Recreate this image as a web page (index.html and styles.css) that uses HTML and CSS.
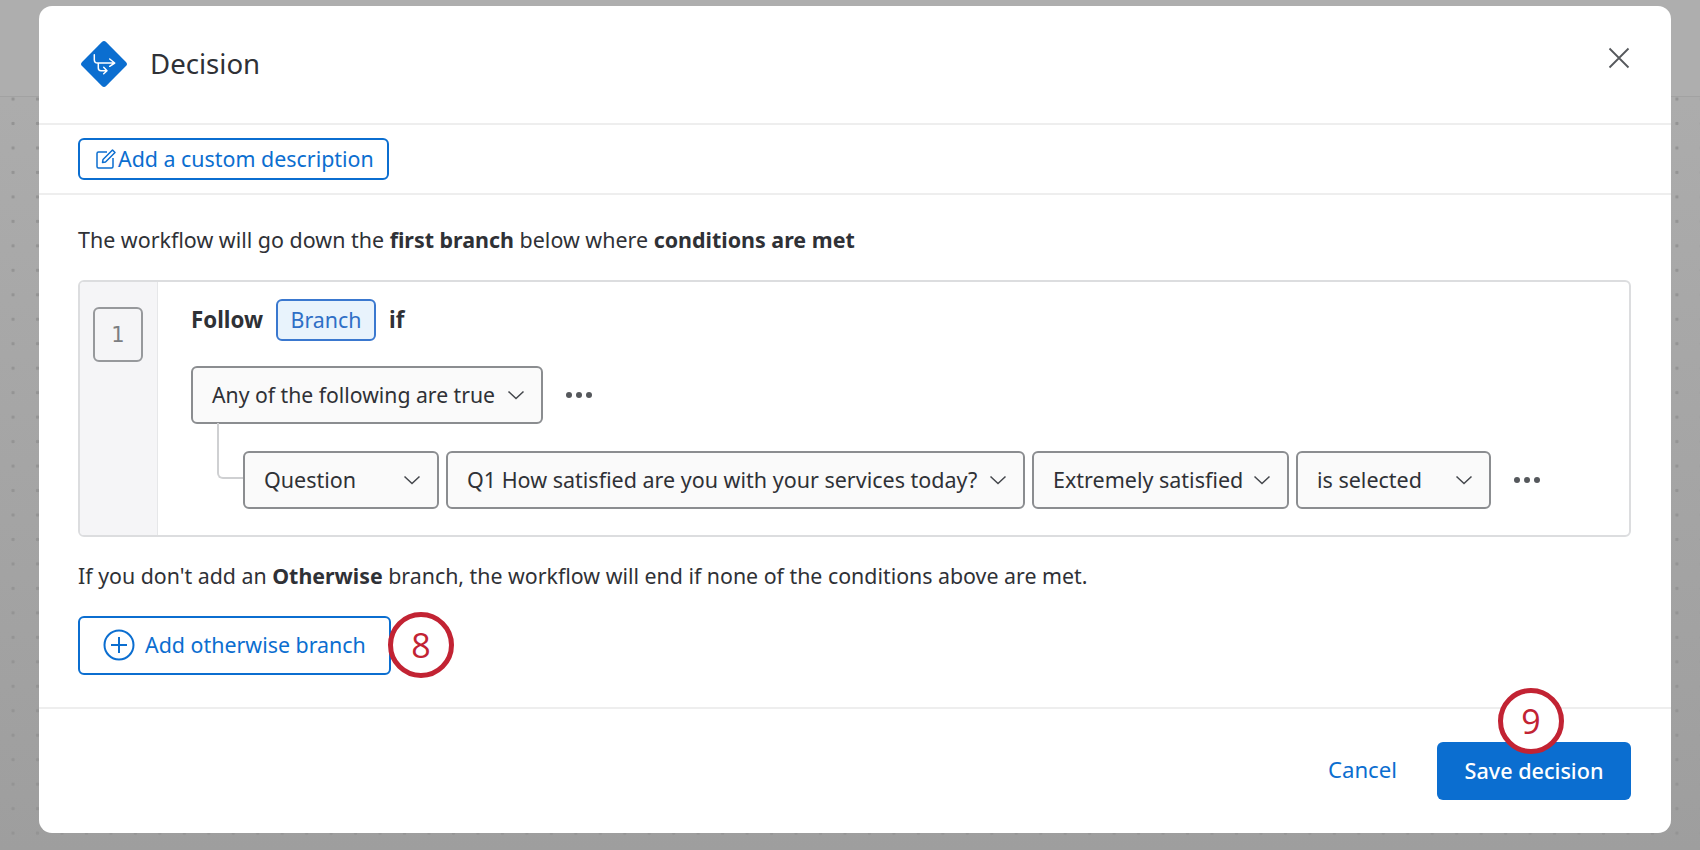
FILE: index.html
```html
<!DOCTYPE html>
<html lang="en">
<head>
<meta charset="utf-8">
<title>Decision</title>
<link rel="stylesheet" href="styles.css">
</head>
<body>
<div class="topband"></div>
<main class="modal">
  <header class="modal-head">
    <svg class="logo" width="50" height="50" viewBox="0 0 50 50"><rect x="8" y="8" width="34" height="34" rx="3" fill="#0b6ed0" transform="rotate(45 25 25)"/><path d="M15.300 15.700v5a3.300 3.300 0 0 0 3.300 3.300H35.700M30.700 20l5 4-5 3.300M19.300 24v5a2.700 2.700 0 0 0 2.700 2.700H28M24.700 28.300l3.300 3.400-3.300 3" fill="none" stroke="#fff" stroke-width="1.500" stroke-linecap="round" stroke-linejoin="round"/></svg>
    <h1 class="title">Decision</h1>
    <svg class="close" width="22" height="22" viewBox="0 0 22 22"><path d="M1.500 1.500l19 19M20.500 1.500l-19 19" fill="none" stroke="#55585c" stroke-width="1.800"/></svg>
  </header>
  <div class="desc-bar">
    <button class="desc-btn">
      <svg width="22" height="22" viewBox="0 0 22 22"><path d="M12 4H3.500A1.500 1.500 0 0 0 2 5.500v13A1.500 1.500 0 0 0 3.500 20h13a1.500 1.500 0 0 0 1.500-1.500V10M8 11.500L17.500 2 20 4.500 10.500 14 7.500 14.500z" fill="none" stroke="#0b6ed0" stroke-width="1.500" stroke-linejoin="round"/></svg>
      <span>Add a custom description</span>
    </button>
  </div>
  <section class="content">
    <p class="intro">The workflow will go down the <b>first branch</b> below where <b>conditions are met</b></p>
    <div class="branch-box">
      <div class="gutter"><div class="num">1</div></div>
      <div class="branch-main">
        <div class="follow"><b>Follow</b><span class="tag">Branch</span><b>if</b></div>
        <div class="any-row">
          <div class="dd dd-any"><span>Any of the following are true</span><svg class="chev" width="18" height="10" viewBox="0 0 18 10"><path d="M1.500 1.500L9 8.500l7.500-7" fill="none" stroke="#44474c" stroke-width="1.500"/></svg></div>
          <div class="more"><i></i><i></i><i></i></div>
        </div>
        <div class="cond-row">
          <span class="elbow"></span>
          <div class="dd dd-q"><span>Question</span><svg class="chev" width="18" height="10" viewBox="0 0 18 10"><path d="M1.500 1.500L9 8.500l7.500-7" fill="none" stroke="#44474c" stroke-width="1.500"/></svg></div>
          <div class="dd dd-q1"><span>Q1 How satisfied are you with your services today?</span><svg class="chev" width="18" height="10" viewBox="0 0 18 10"><path d="M1.500 1.500L9 8.500l7.500-7" fill="none" stroke="#44474c" stroke-width="1.500"/></svg></div>
          <div class="dd dd-ext"><span>Extremely satisfied</span><svg class="chev" width="18" height="10" viewBox="0 0 18 10"><path d="M1.500 1.500L9 8.500l7.500-7" fill="none" stroke="#44474c" stroke-width="1.500"/></svg></div>
          <div class="dd dd-sel"><span>is selected</span><svg class="chev" width="18" height="10" viewBox="0 0 18 10"><path d="M1.500 1.500L9 8.500l7.500-7" fill="none" stroke="#44474c" stroke-width="1.500"/></svg></div>
          <div class="more"><i></i><i></i><i></i></div>
        </div>
      </div>
    </div>
    <p class="note">If you don't add an <b>Otherwise</b> branch, the workflow will end if none of the conditions above are met.</p>
    <div class="add-row">
      <button class="add-btn">
        <svg width="32" height="32" viewBox="0 0 32 32"><circle cx="16" cy="16" r="14.500" fill="none" stroke="#0b6ed0" stroke-width="2"/><path d="M16 8v16M8 16h16" stroke="#0b6ed0" stroke-width="2"/></svg>
        <span>Add otherwise branch</span>
      </button>
      <div class="badge badge-8">8</div>
    </div>
  </section>
  <footer class="modal-foot">
    <a class="cancel">Cancel</a>
    <div class="save-wrap">
      <div class="badge badge-9">9</div>
      <button class="save">Save decision</button>
    </div>
  </footer>
</main>
</body>
</html>
```
FILE: styles.css
```css
* { box-sizing: border-box; }
html, body { margin: 0; height: 850px; overflow: hidden; }
body {
  position: relative;
  padding: 6px 29px 0 39px;
  font-family: "Noto Sans", sans-serif;
  color: #2f3136;
  background-color: #a4a4a4;
  background-image:
    radial-gradient(circle, #949494 0 1.500px, transparent 2px),
    linear-gradient(180deg, #aeaeae 0, #a8a8a8 300px, #9e9e9e 100%);
  background-size: 24.47px 24.47px, 100% 100%;
  background-position: 0.8px 86.8px, 0 0;
}
.topband {
  position: absolute;
  left: 0; top: 0; right: 0;
  height: 97px;
  background: #aeaeae;
  border-bottom: 1px solid #a2a2a2;
}
.modal {
  position: relative;
  width: 1632px;
  height: 827px;
  background: #fff;
  border-radius: 13px;
  display: flex;
  flex-direction: column;
}
.modal-head {
  height: 119px;
  padding: 0 41px 0 40px;
  display: flex;
  align-items: flex-start;
  border-bottom: 2px solid #eeeeee;
}
.logo { margin-top: 33px; }
.title { margin: 39px 0 0 21px; font-size: 27.6px; line-height: 36px; font-weight: 400; flex: 1; }
.close { margin-top: 41px; }
.desc-bar {
  height: 70px;
  padding: 13px 39px 0;
  border-bottom: 2px solid #eeeeee;
}
button { font-family: inherit; cursor: pointer; background: #fff; }
.desc-btn {
  width: 311px;
  height: 42px;
  padding: 0 0 2px 15px;
  display: flex;
  align-items: center;
  gap: 1px;
  border: 2px solid #0b6ed0;
  border-radius: 6px;
  color: #0b6ed0;
  font-size: 21.4px;
}
.desc-btn svg { margin-top: 2px; }
.content { flex: 1; padding: 0 39px; }
.intro { margin: 30px 0 0; font-size: 21.45px; line-height: 30px; }
.branch-box {
  margin-top: 25px;
  width: 1553px;
  height: 257px;
  border: 2px solid #dcdddf;
  border-radius: 6px;
  display: flex;
  overflow: hidden;
}
.gutter { width: 78px; background: #f5f5f7; border-right: 1px solid #e6e7e9; padding: 25px 0 0 13px; flex: none; }
.num {
  width: 50px; height: 55px;
  display: flex; align-items: center; justify-content: center;
  border: 2px solid #97999c;
  border-radius: 6px;
  font-family: "DejaVu Sans", sans-serif;
  font-size: 21px;
  color: #7c7e82;
}
.branch-main { padding: 17px 0 0 33px; flex: 1; }
.follow { display: flex; align-items: center; height: 42px; font-size: 22.3px; }
.follow b { padding-bottom: 2px; }
.tag {
  margin: 0 13px 0 13px;
  width: 100px; height: 42px;
  padding-bottom: 2px;
  display: flex; align-items: center; justify-content: center;
  background: #e8f3fc;
  border: 2px solid #3a78cf;
  border-radius: 6px;
  font-size: 21.4px;
  color: #2f6fc6;
}
.any-row { margin-top: 25px; display: flex; align-items: center; gap: 23px; }
.dd {
  height: 58px;
  padding: 0 16px 2px 19px;
  display: flex; align-items: center; justify-content: space-between;
  background: #fafafa;
  border: 2px solid #8b8d90;
  border-radius: 6px;
  font-size: 21.5px;
  flex: none;
}
.dd span { white-space: nowrap; }
.chev { flex: none; margin-top: 2px; }
.dd-any { width: 352px; font-size: 21.2px; }
.more { display: flex; gap: 4px; }
.more i { width: 6px; height: 6px; border-radius: 50%; background: #55585c; display: block; }
.cond-row { position: relative; margin: 27px 0 0 52px; display: flex; align-items: center; gap: 7px; }
.elbow {
  position: absolute; left: -26px; top: -28px;
  width: 26px; height: 56px;
  border-left: 2px solid #cfd0d2;
  border-bottom: 2px solid #cfd0d2;
  border-bottom-left-radius: 6px;
}
.dd-q { width: 196px; }
.dd-q1 { width: 579px; }
.dd-ext { width: 257px; }
.dd-sel { width: 195px; }
.cond-row .more { margin-left: 16px; }
.note { margin: 24px 0 0; font-size: 21.35px; line-height: 30px; }
.add-row { margin-top: 21px; display: flex; align-items: center; }
.add-btn {
  width: 313px; height: 59px;
  padding: 0 0 2px 23px;
  display: flex; align-items: center; gap: 10px;
  border: 2px solid #0b6ed0;
  border-radius: 6px;
  color: #0b6ed0;
  font-size: 21.4px;
}
.add-btn svg { margin-top: 2px; }
.badge {
  width: 66px; height: 66px;
  display: flex; align-items: center; justify-content: center;
  background: #fff;
  border: 5px solid #c22333;
  border-radius: 50%;
  color: #c22333;
  font-family: "Open Sans", sans-serif;
  font-size: 34px;
  font-weight: 500;
  flex: none;
}
.badge-8 { margin-left: -3px; }
.modal-foot {
  height: 126px;
  padding: 33px 40px 0 0;
  display: flex; justify-content: flex-end; align-items: flex-start;
  border-top: 2px solid #eeeeee;
}
.cancel { margin: 13px 40px 0 0; font-size: 22.2px; line-height: 30px; color: #0b6ed0; }
.save-wrap { position: relative; }
.save {
  width: 194px; height: 58px;
  padding: 0 0 2px;
  border: 0; border-radius: 6px;
  background: #0b6ed0;
  color: #fff;
  font-size: 21.6px;
  font-weight: 500;
}
.badge-9 { position: absolute; left: 61px; top: -54px; }
```
